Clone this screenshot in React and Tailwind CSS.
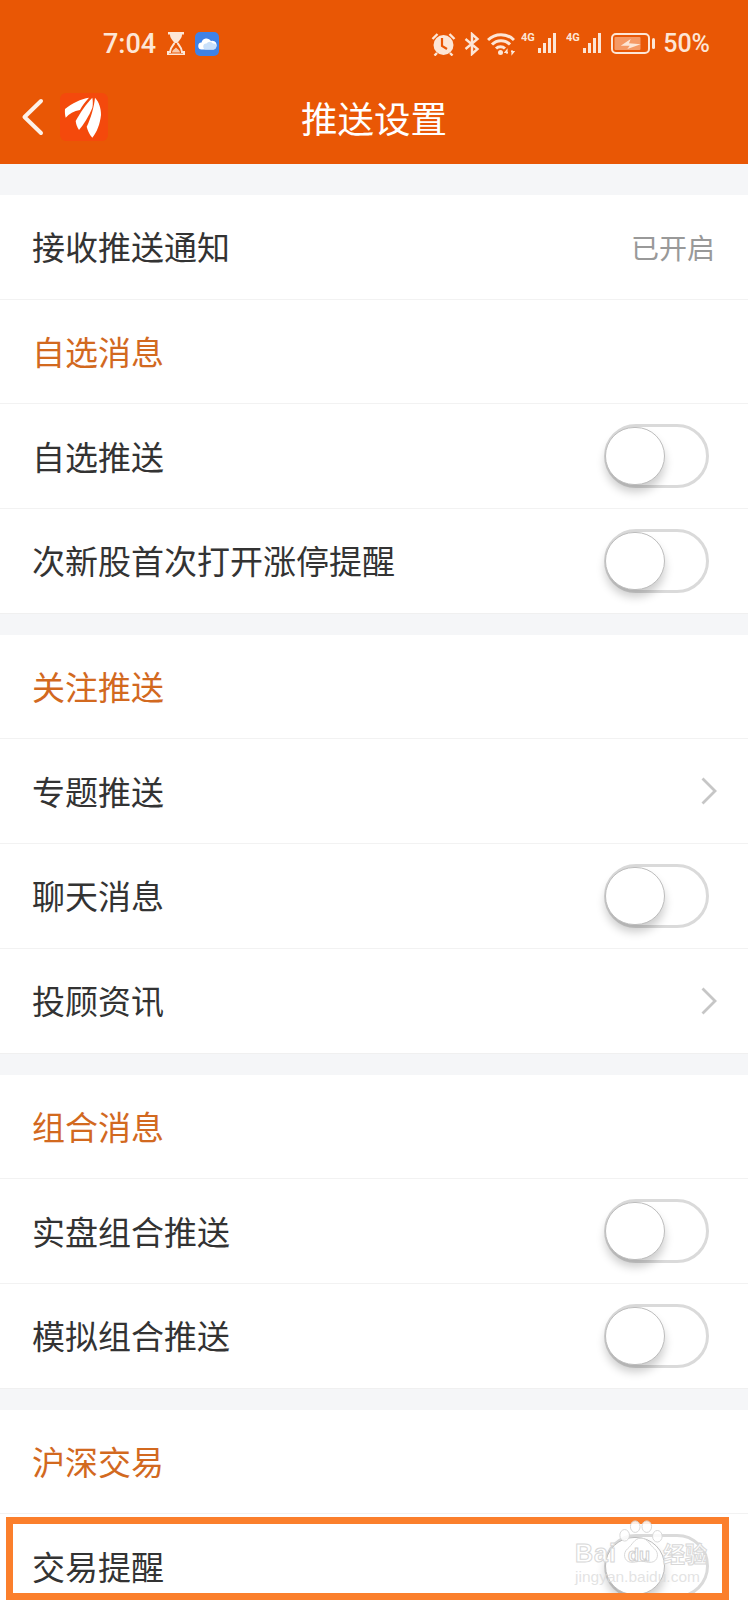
const cjk = 'font-["Noto_Sans_CJK_SC","Noto_Sans",sans-serif]';

const Toggle = () => (
  <div className="relative w-[105px] h-[64px] rounded-full border-[3px] border-[#dadada] bg-white">
    <div className="absolute -left-[2px] top-0 w-[60px] h-[58px] rounded-full bg-white border border-[#bdbdbd] shadow-[0px_7px_10px_rgba(0,0,0,0.2)]"></div>
  </div>
);

const Chevron = () => (
  <svg width="16" height="28" viewBox="0 0 16 28" fill="none" className="-mr-[8px]">
    <path d="M1.5 1.5 L14 14 L1.5 26.5" stroke="#c6c6c6" strokeWidth="2.8" />
  </svg>
);

const Row = ({ label, children, last }) => (
  <div className={`h-[103.7px] box-content flex items-center justify-between pl-[32px] pr-[39px] bg-white ${last ? '' : 'border-b border-[#f2f2f2]'}`}>
    <span className="text-[33px] text-[#333333] leading-none">{label}</span>
    {children}
  </div>
);

const SectionTitle = ({ label }) => (
  <div className="h-[103.7px] box-content flex items-center pl-[32px] bg-white border-b border-[#f2f2f2]">
    <span className="text-[33px] text-[#d2691f] leading-none">{label}</span>
  </div>
);

const Gap = () => <div className="h-[22px] bg-[#f5f6f8] border-t border-[#f0f0f0]"></div>;

const Signal = () => (
  <svg width="37" height="24" viewBox="0 0 37 24" fill="#fde6d6">
    <text x="0" y="9" fontSize="11" fontWeight="700" fontFamily="Roboto, sans-serif">4G</text>
    <rect x="17" y="16" width="3" height="5" />
    <rect x="22" y="11" width="3" height="10" />
    <rect x="27" y="6" width="3" height="15" />
    <rect x="32" y="1" width="3" height="20" />
  </svg>
);

const StatusBar = () => (
  <div className="h-[88px] pt-[32px] pl-[103px] flex items-start text-[#fde6d6]">
    <span className="text-[27px] leading-[24px] font-medium font-['Roboto',sans-serif] w-[64px]">7:04</span>
    <svg width="18" height="23" viewBox="0 0 18 23" className="mr-[10px]">
      <path d="M1 0h16v2.500h-2c0 4-3 6-4.500 8.500h-3C6 8.500 3 6.500 3 2.500H1z" fill="#fde6d6" />
      <path d="M7.500 11C6 13.500 3 15.500 3 20H1v2.500h16V20h-2c0-4.500-3-6.500-4.500-9" fill="none" stroke="#fde6d6" strokeWidth="2" />
      <path d="M5 20.500c0-2 2.500-3.500 4-5 1.500 1.500 4 3 4 5z" fill="#fde6d6" opacity="0.8" />
    </svg>
    <svg width="24" height="24" viewBox="0 0 24 24">
      <rect width="24" height="24" rx="5" fill="#3f82e6" />
      <path d="M7 17.500a3.500 3.500 0 0 1-.5-7 5.200 5.200 0 0 1 9.500-1.500 4.300 4.300 0 0 1 2.500 8.500z" fill="#ffffff" />
      <path d="M11 17.500a3 3 0 0 1 .5-6 4 4 0 0 1 6.500 0 3 3 0 0 1 .5 6z" fill="#c9e0fa" />
    </svg>
    <div className="ml-auto flex items-start mr-[38px]">
      <svg width="25" height="24" viewBox="0 0 25 24" className="mr-[8px]">
        <circle cx="12.500" cy="13" r="10" fill="#fde6d6" />
        <path d="M11 6v8l5 3" stroke="#e95705" strokeWidth="2.200" fill="none" />
        <path d="M1.500 7l5-5M23.500 7l-5-5M6 21l-2.500 2.500M19 21l2.500 2.500" stroke="#fde6d6" strokeWidth="2.400" />
      </svg>
      <svg width="16" height="24" viewBox="0 0 16 24" fill="none" className="mr-[7px]">
        <path d="M1.500 7l12 10-5.500 5V2l5.500 5-12 10" stroke="#fde6d6" strokeWidth="2.400" />
      </svg>
      <svg width="28" height="24" viewBox="0 0 28 24" fill="none" className="mr-[6px]">
        <path d="M1 8a18.500 18.500 0 0 1 26 0M5 12.500a12.500 12.500 0 0 1 18 0M9 16.500a6.500 6.500 0 0 1 9 0" stroke="#fde6d6" strokeWidth="3" />
        <circle cx="13.500" cy="20.500" r="2.500" fill="#fde6d6" />
        <path d="M20 22v-4l-2 2.500h3M25 18v4l2-2.500h-3" stroke="#fde6d6" strokeWidth="1.200" />
      </svg>
      <Signal />
      <div className="w-[8px]"></div>
      <Signal />
      <svg width="45" height="24" viewBox="0 0 45 24" fill="none" className="ml-[8px] mr-[7px]">
        <rect x="1" y="2" width="37" height="19" rx="4" stroke="#fde6d6" strokeWidth="2" />
        <rect x="3.500" y="5" width="26" height="13" rx="1" fill="#f59a66" />
        <path d="M9.700 13.700L19.700 7 18 11.300l11.700 1L16.300 17l2.400-3.300z" fill="#fde6d6" />
        <rect x="41" y="6" width="3" height="11" rx="1.500" fill="#fde6d6" />
      </svg>
      <span className="text-[25px] leading-[24px] font-medium font-['Roboto',sans-serif]">50%</span>
    </div>
  </div>
);

const NavBar = () => (
  <div className="h-[76px] grid grid-cols-[1fr_auto_1fr] text-white">
    <div className="flex items-start pl-[21px]">
      <svg width="23" height="38" viewBox="0 0 23 38" fill="none" className="mt-[10px]">
        <path d="M20 3 L3.500 19 L20 35" stroke="#fdf1e8" strokeWidth="4" strokeLinecap="round" strokeLinejoin="round" />
      </svg>
      <svg width="48" height="48" viewBox="0 0 48 48" className="ml-[16px] mt-[5px]">
        <rect width="48" height="48" rx="6" fill="#f4490c" />
        <path d="M5 16C12 10 21 6 29 4.700 25 9 22 13 20 17 14 18 9 21 5.700 24.700 5 22 4.700 19 5 16z" fill="#ffffff" />
        <path d="M15.700 28C20 20 26 11 32.300 4.700 33 8 33 12 32.300 15 29 23 24 31 19 37 17 34 16 31 15.700 28z" fill="#ffffff" />
        <path d="M26.700 33.700C31 25 34 14 35 4.700 39 9 41 15 41 22 40 31 37 39 32.300 44.700 29 41 27.500 37 26.700 33.700z" fill="#ffffff" />
      </svg>
    </div>
    <span className="text-[36.5px] leading-none pt-[12px]">推送设置</span>
    <div></div>
  </div>
);

export default function App() {
  return (
    <div className={`relative w-[748px] h-[1600px] overflow-hidden bg-[#f5f6f8] ${cjk}`}>
      <div className="bg-[#e95705]">
        <StatusBar />
        <NavBar />
      </div>

      <div className="h-[31px]"></div>

      <Row label="接收推送通知">
        <span className="text-[28px] text-[#999999] leading-none -mr-[6px]">已开启</span>
      </Row>
      <SectionTitle label="自选消息" />
      <Row label="自选推送"><Toggle /></Row>
      <Row label="次新股首次打开涨停提醒" last><Toggle /></Row>
      <Gap />

      <SectionTitle label="关注推送" />
      <Row label="专题推送"><Chevron /></Row>
      <Row label="聊天消息"><Toggle /></Row>
      <Row label="投顾资讯" last><Chevron /></Row>
      <Gap />

      <SectionTitle label="组合消息" />
      <Row label="实盘组合推送"><Toggle /></Row>
      <Row label="模拟组合推送" last><Toggle /></Row>
      <Gap />

      <SectionTitle label="沪深交易" />
      <Row label="交易提醒"><Toggle /></Row>

      {/* highlight box drawn over the screenshot */}
      <div className="absolute left-[6px] top-[1517px] w-[723px] h-[83px] border-[7px] border-[#fb7f2c]"></div>

      {/* baidu watermark */}
      <div className="absolute left-[575px] top-[1520px] w-[134px] h-[66px] text-white font-['Liberation_Sans',sans-serif]">
        <svg width="50" height="46" viewBox="0 0 52 46" className="absolute left-[41px] top-0" fill="rgba(255,255,255,0.85)" stroke="#d6d6d6" strokeWidth="1">
          <ellipse cx="20" cy="6" rx="5" ry="6" />
          <ellipse cx="32" cy="6" rx="5" ry="6" />
          <ellipse cx="9" cy="15" rx="5" ry="6" />
          <ellipse cx="43" cy="16" rx="5" ry="6" />
          <path d="M26 18c7 0 9 7 14 11 5 4 4 13-3 14-4 .500-7-1-11-1s-7 1.500-11 1c-7-1-8-10-3-14 5-4 7-11 14-11z" />
        </svg>
        <span className="absolute left-0 top-[21px] text-[25px] leading-none font-bold tracking-[1px] text-white/80 [-webkit-text-stroke:1px_#d8d8d8]">Bai</span>
        <span className="absolute left-[53px] top-[26px] text-[18px] leading-none font-bold text-white/80 [-webkit-text-stroke:1px_#d0d0d0]">du</span>
        <span className={`absolute left-[88px] top-[21px] text-[22px] leading-none font-bold text-white/80 [-webkit-text-stroke:1px_#d8d8d8] ${cjk}`}>经验</span>
        <span className="absolute left-0 top-[49px] text-[15.5px] leading-none whitespace-nowrap text-[#dcdcdc]/80">jingyan.baidu.com</span>
      </div>
    </div>
  );
}
